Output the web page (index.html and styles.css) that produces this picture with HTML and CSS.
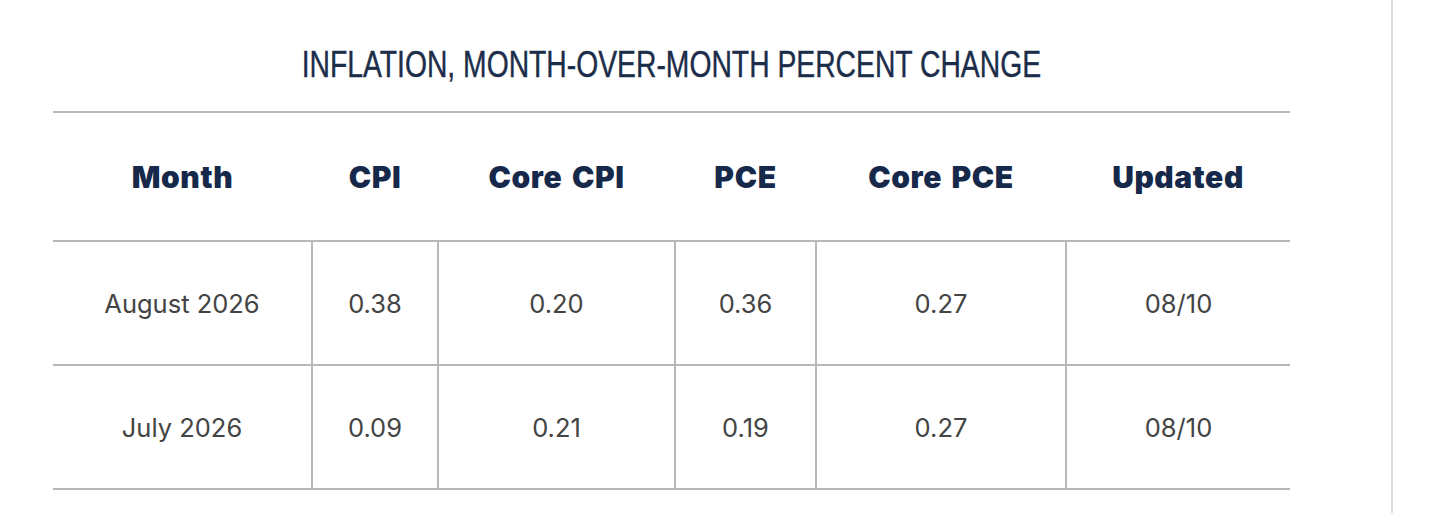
FILE: index.html
```html
<!DOCTYPE html>
<html lang="en">
<head>
<meta charset="utf-8">
<title>Inflation, Month-over-Month Percent Change</title>
<link rel="stylesheet" href="styles.css">
</head>
<body>
<div class="page">
  <section class="panel">
    <h2 class="title"><span class="title-text">INFLATION, MONTH-OVER-MONTH PERCENT CHANGE</span></h2>
    <table class="data">
      <colgroup>
        <col class="c1"><col class="c2"><col class="c3"><col class="c4"><col class="c5"><col class="c6">
      </colgroup>
      <thead>
        <tr>
          <th>Month</th>
          <th>CPI</th>
          <th>Core CPI</th>
          <th>PCE</th>
          <th>Core PCE</th>
          <th>Updated</th>
        </tr>
      </thead>
      <tbody>
        <tr>
          <td>August 2026</td>
          <td>0.38</td>
          <td>0.20</td>
          <td>0.36</td>
          <td>0.27</td>
          <td>08/10</td>
        </tr>
        <tr>
          <td>July 2026</td>
          <td>0.09</td>
          <td>0.21</td>
          <td>0.19</td>
          <td>0.27</td>
          <td>08/10</td>
        </tr>
      </tbody>
    </table>
  </section>
</div>
</body>
</html>
```

FILE: styles.css
```css
html, body {
  margin: 0;
  padding: 0;
  background: #ffffff;
}

.page {
  width: 1393px;
  min-height: 513px;
  box-sizing: border-box;
  border-right: 2px solid #dedede;
  padding-left: 53px;
  padding-top: 43px;
}

.panel {
  width: 1237px;
}

.title {
  margin: 0 0 25px 0;
  text-align: center;
  font-family: "Liberation Sans", Arial, sans-serif;
  font-weight: 400;
  font-size: 36px;
  line-height: 43px;
  color: #1c2d4a;
}

.title-text {
  display: inline-block;
  transform: scaleX(0.786);
  white-space: nowrap;
  -webkit-text-stroke: 0.4px #1c2d4a;
}

.data {
  width: 1237px;
  border-collapse: collapse;
  table-layout: fixed;
  border-top: 2px solid #b8b8b8;
}

.c1 { width: 259px; }
.c2 { width: 126px; }
.c3 { width: 237px; }
.c4 { width: 141px; }
.c5 { width: 250px; }
.c6 { width: 224px; }

.data th {
  height: 127px;
  padding: 0;
  text-align: center;
  vertical-align: middle;
  font-family: Inter, "Liberation Sans", sans-serif;
  font-weight: 900;
  font-size: 30px;
  letter-spacing: 0.6px;
  word-spacing: 3px;
  color: #16294a;
  border-bottom: 2px solid #b8b8b8;
}

.data td {
  height: 122px;
  padding: 0;
  text-align: center;
  vertical-align: middle;
  font-family: Inter, "Liberation Sans", sans-serif;
  font-weight: 400;
  font-size: 25.5px;
  color: #444444;
  border-bottom: 2px solid #b8b8b8;
  border-left: 2px solid #b8b8b8;
}

.data td:first-child {
  border-left: none;
}
```
